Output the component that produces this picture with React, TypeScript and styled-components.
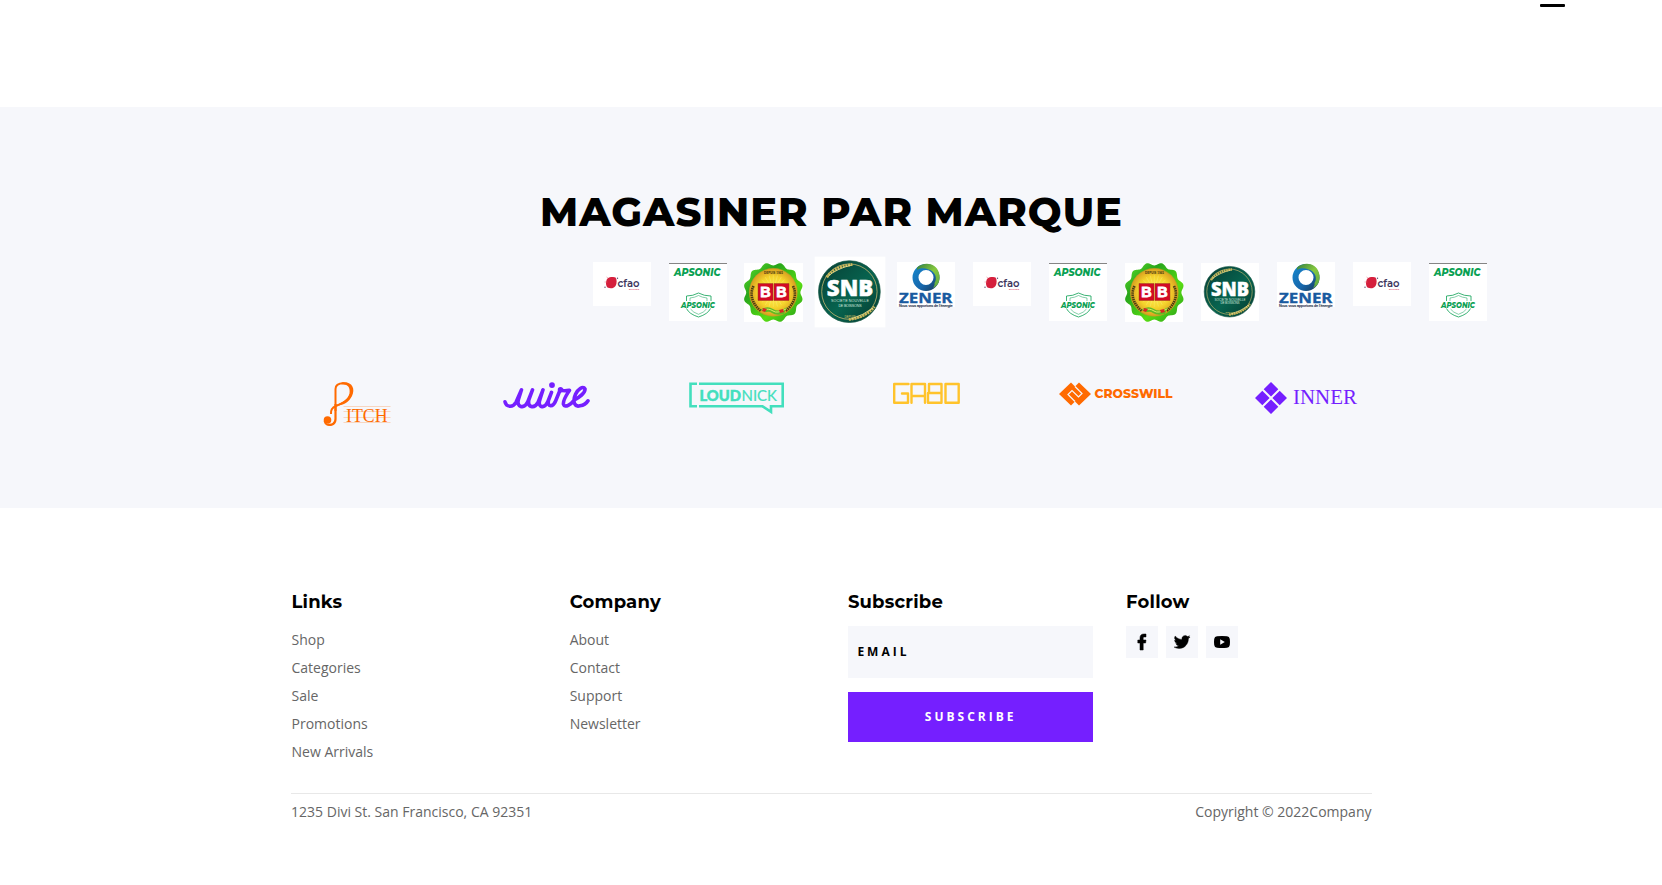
import React from 'react';
import styled, { createGlobalStyle } from 'styled-components';

const GlobalStyle = createGlobalStyle`
  *, *::before, *::after { box-sizing: border-box; }
  html, body { margin: 0; background: #fff; overflow: hidden; }
  body { font-family: 'Open Sans', 'Noto Sans', sans-serif; font-size: 14px; color: #666; }
  h2, h4, p, ul { margin: 0; padding: 0; }
  svg { display: block; overflow: visible; }
`;

const display = `Montserrat, Inter, 'Open Sans', sans-serif`;

const TopStrip = styled.div`
  display: flex;
  justify-content: flex-end;
  height: 107px;
  padding: 4px 97px 0 0;
`;

const Dash = styled.span`
  width: 25px;
  height: 3px;
  border-radius: 1px;
  background: #000;
`;

const BrandSection = styled.section`
  height: 401px;
  padding-top: 83px;
  background: #f6f7fb;
`;

const Title = styled.h2`
  height: 44px;
  padding-left: 1px;
  font: 800 40px/44px ${display};
  letter-spacing: 1px;
  text-align: center;
  color: #000;
  white-space: nowrap;
`;

const Carousel = styled.div`
  display: flex;
  align-items: flex-start;
  gap: 17.95px;
  height: 120px;
  padding: 28px 0 0 592.6px;
`;

const Tile = styled.div<{ $h: number; $top?: number; $active?: boolean }>`
  flex: 0 0 58px;
  height: ${(p) => p.$h}px;
  margin-top: ${(p) => p.$top ?? 0}px;
  background: #fff;
  transform: ${(p) => (p.$active ? 'scale(1.22)' : 'none')};
`;

const Container = styled.div`
  width: 1080px;
  margin: 0 auto;
`;

const Partners = styled(Container)`
  display: grid;
  grid-template-columns: repeat(6, 1fr);
  column-gap: 58px;
  padding: 28px 0 0 1px;
  width: 1081px;
  justify-items: center;
`;

const FooterColumns = styled(Container)`
  display: grid;
  grid-template-columns: repeat(4, 245.5px);
  column-gap: 32.7px;
  height: 285px;
  padding: 83px 0 0 0.5px;
`;

const ColumnTitle = styled.h4`
  height: 35px;
  font: 700 18px/22px ${display};
  letter-spacing: 0.2px;
  color: #000;
`;

const LinkList = styled.ul`
  list-style: none;
`;

const LinkItem = styled.li`
  height: 28px;
  line-height: 28px;
`;

const EmailInput = styled.input`
  display: block;
  width: 100%;
  height: 52px;
  padding: 0 9.5px 2px;
  border: 0;
  background: #f6f7fb;
  font: 700 12px 'Open Sans', sans-serif;
  letter-spacing: 3px;
  &::placeholder { color: #000; opacity: 1; }
`;

const SubscribeButton = styled.button`
  display: block;
  width: 100%;
  height: 50px;
  margin-top: 14px;
  padding: 0 6px 2px;
  border: 0;
  background: #751fff;
  color: #fff;
  font: 700 12px 'Open Sans', sans-serif;
  letter-spacing: 3px;
`;

const Socials = styled.div`
  display: flex;
  gap: 8px;
`;

const SocialLink = styled.a`
  display: grid;
  place-items: center;
  width: 32px;
  height: 32px;
  background: #f6f7fb;
`;

const Bottom = styled(Container)`
  display: flex;
  justify-content: space-between;
  padding: 6px 0 0 0.6px;
  width: 1081px;
  border-top: 1px solid #e8e8e8;
  line-height: 24px;
`;

const Cfao = () => (
  <Tile $h={44}>
    <svg width="58" height="44" viewBox="0 0 58 44">
      <path d="M14.500 16.500C17 14.500 21 15 22.500 15.500c1.500 2 1.500 6 0 8.500-2 3-6 2.500-8 1.500-2-2-2-6.500 0-9z" fill="#d51f3c" />
      <path d="M11.500 20h3M15 16l-1.500-1" stroke="#e66a7b" strokeWidth=".5" />
      <circle cx="24.500" cy="16.300" r=".7" fill="#565173" />
      <circle cx="12" cy="25.300" r=".7" fill="#565173" />
      <text x="24.500" y="24.500" fontFamily="Montserrat, Inter, sans-serif" fontWeight="600" fontSize="10" textLength="22" lengthAdjust="spacingAndGlyphs" fill="#3d365c">cfao</text>
      <text x="36" y="27.600" fontFamily="Liberation Sans" fontWeight="700" fontSize="2" textLength="10" fill="#d51f3c">MOTORS</text>
    </svg>
  </Tile>
);

const Apsonic = () => (
  <Tile $h={58.5} $top={0.5}>
    <svg width="58" height="58" viewBox="0 0 58 58">
      <path d="M0 .5H58" stroke="#777" strokeWidth=".9" />
      <g fontFamily="Montserrat, Open Sans, sans-serif" fontWeight="800" fontStyle="italic" fill="#09a052">
        <text x="5" y="13" fontSize="9.800" textLength="46.500" lengthAdjust="spacingAndGlyphs">APSONIC</text>
        <g fill="none" stroke="#09a052" strokeWidth=".8">
          <path d="M17.500 38V33Q24 33 29.500 30Q35 33 42 33V38M17.500 45.500Q20 51 29.500 54Q39 51 41.500 45.500" />
          <path d="M21 38V35Q26 34.500 29.500 32.500Q33 34.500 38 35V38M21.500 46Q24 49.500 29.500 51.300Q35 49.500 37.500 46" strokeWidth=".5" />
        </g>
        <text x="12" y="45" fontSize="8" textLength="34" lengthAdjust="spacingAndGlyphs">APSONIC</text>
      </g>
    </svg>
  </Tile>
);

const petals = (() => {
  const pts: string[] = [];
  for (let i = 0; i <= 180; i++) {
    const t = (i / 180) * Math.PI * 2;
    const r = 28.6 - 1.5 * Math.cos(12 * t);
    pts.push(`${(29.3 + r * Math.sin(t)).toFixed(2)},${(29.5 - r * Math.cos(t)).toFixed(2)}`);
  }
  return pts.join(' ');
})();

const BB = ({ id }: { id: string }) => (
  <Tile $h={59} $top={0.5}>
    <svg width="58.6" height="59" viewBox="0 0 58.6 59">
      <defs>
        <radialGradient id={`${id}-gold`}>
          <stop offset="0" stopColor="#fff65e" />
          <stop offset=".65" stopColor="#f5d32c" />
          <stop offset="1" stopColor="#d89e20" />
        </radialGradient>
        <linearGradient id={`${id}-green`} x1="0" y1="0" x2="1" y2="1">
          <stop offset="0" stopColor="#66e52c" />
          <stop offset=".3" stopColor="#27a51b" />
          <stop offset=".65" stopColor="#58dc13" />
          <stop offset="1" stopColor="#23991b" />
        </linearGradient>
      </defs>
      <polygon points={petals} fill={`url(#${id}-green)`} />
      <circle cx="29.300" cy="29.300" r="24" fill={`url(#${id}-gold)`} stroke="#b99c25" strokeWidth=".5" />
      <g stroke="#fff7a0" strokeWidth=".4" opacity=".65">
        {Array.from({ length: 24 }, (_, i) => (
          <path key={i} d="M29.300 28V12" transform={`rotate(${i * 15} 29.3 28)`} />
        ))}
      </g>
      <g fill="none" stroke="#493b14" strokeWidth="2.600" strokeDasharray="1.500 .7">
        <path d="M9.500 23C5 32 9 42 17 48" />
        <path d="M49 23C53.500 32 49.500 42 41.500 48" />
      </g>
      <text x="20" y="11.500" fontFamily="Liberation Sans" fontSize="3" fontWeight="700" textLength="19" fill="#3c2c11">DEPUIS 1965</text>
      <path d="M14 20.500h15v17h-15zM30 20.500h15v17h-15z" fill="#d20a25" stroke="#99411e" strokeWidth=".5" />
      <g fontFamily="Liberation Sans" fontWeight="700" fontSize="14.500" fill="#fff" stroke="#fff" strokeWidth=".8">
        <text x="16.300" y="34">B</text>
        <text x="32.300" y="34">B</text>
      </g>
      <path d="M16 47Q23 42 29 46T43 44L40 51Q32 53 28 50T18 51L22 49z" fill="#60ba25" />
      <path d="M18 47Q25 45 29 48T42 46" fill="none" stroke="#dded61" />
      <path d="M19 45l4 1-2 3-3-1zM35 47l4-1 1 3-4 1z" fill="#d82923" />
    </svg>
  </Tile>
);

const Snb = ({ id, active }: { id: string; active?: boolean }) => (
  <Tile $h={58} $top={0.8} $active={active}>
    <svg width="58" height="58" viewBox="0 0 58 58">
      <defs>
        <linearGradient id={id} x1="0" y1="0" x2="1" y2="1">
          <stop offset="0" stopColor="#073c34" />
          <stop offset=".55" stopColor="#07644f" />
          <stop offset="1" stopColor="#05382f" />
        </linearGradient>
      </defs>
      <circle cx="28.500" cy="28.700" r="25.300" fill={`url(#${id})`} stroke="#195946" strokeWidth=".6" />
      <circle cx="28.500" cy="28.700" r="22.700" fill="none" stroke="#b8b16c" strokeWidth=".7" />
      <g fill="none" stroke="#cab759" strokeWidth="2.300" strokeDasharray="1.700 .6">
        <path d="M10 17Q16 8 31 6.500" />
        <path d="M28 51.500Q42 50 49 41" />
      </g>
      <path d="M11 16Q18 10 30 7M30 51Q40 48 48 42" fill="none" stroke="#f1df8e" strokeWidth=".7" />
      <text x="10" y="32.600" fontFamily="Open Sans, sans-serif" fontWeight="800" fontSize="18.500" textLength="38" lengthAdjust="spacingAndGlyphs" fill="#fff" stroke="#fff" strokeWidth=".4">SNB</text>
      <g fontFamily="Liberation Sans" fontSize="3" fill="#d5e7df">
        <text x="13.500" y="37.600" textLength="31">SOCIETE NOUVELLE</text>
        <text x="19.500" y="41.200" textLength="19">DE BOISSONS</text>
      </g>
      <text x="24.500" y="50" fontFamily="Liberation Sans" fontSize="2.500" textLength="9" fill="#d7c66a">DEPUIS</text>
    </svg>
  </Tile>
);

const Zener = ({ id }: { id: string }) => (
  <Tile $h={45}>
    <svg width="58" height="45" viewBox="0 0 58 45">
      <defs>
        <linearGradient id={`${id}-g`} x1="0" y1="0" x2="1" y2="1">
          <stop offset="0" stopColor="#327d41" />
          <stop offset=".5" stopColor="#85c83e" />
          <stop offset="1" stopColor="#58a543" />
        </linearGradient>
        <linearGradient id={`${id}-b`} x1="0" y1="0" x2="1" y2="1">
          <stop offset="0" stopColor="#1683c8" />
          <stop offset=".6" stopColor="#1767ad" />
          <stop offset="1" stopColor="#184064" />
        </linearGradient>
      </defs>
      <circle cx="29" cy="15.500" r="10.500" fill="none" stroke={`url(#${id}-b)`} strokeWidth="6" />
      <path d="M20 5.500C27-.5 39 .5 42 11c2 7-1 13-6 15 1-2 2-3 1.500-5 3-4 1-12-6-13.500C27 5.500 23 6 20 8z" fill={`url(#${id}-g)`} />
      <text x="2" y="41.300" fontFamily="Open Sans, sans-serif" fontWeight="700" fontSize="13.800" textLength="53.500" lengthAdjust="spacingAndGlyphs" fill="#185aa0" stroke="#185aa0" strokeWidth=".3">ZENER</text>
      <text x="2" y="44.800" fontFamily="Liberation Sans" fontSize="3.300" textLength="53.500" lengthAdjust="spacingAndGlyphs" fill="#202b45" stroke="#202b45" strokeWidth=".15">Nous vous apportons de l'énergie</text>
    </svg>
  </Tile>
);

const Pitch = () => (
  <svg width="67" height="44" viewBox="0.5 0 67 44">
    <path d="M20 24.500H67M20 29.500H67M20 35.500H67M20 40.500H67" stroke="#ff6a00" strokeWidth=".6" opacity=".38" />
    <path d="M12 29V7C12 2 17 1.200 20 1.200c5 0 8 3 8 7 0 8-6 12-15 15.500C8 26 7.300 28 7.500 32" fill="none" stroke="#ff6a00" strokeWidth="2" />
    <path d="M18 .5C29-.8 32 7 28.500 14c-3 6-8 8.500-13 9.500l-2-1c5-2 11-5 12.500-11C27 5 24 2 18 2.200z" fill="#ff6a00" />
    <path d="M12 22V37C12 42 8 43.500 4.500 42.500" fill="none" stroke="#ff6a00" strokeWidth="2.200" />
    <circle cx="4" cy="38" r="3.800" fill="#ff6a00" />
    <path d="M1 39C1.500 43 5 43.500 8 42.500" fill="none" stroke="#ff6a00" strokeWidth="1.700" />
    <text x="22.500" y="39.600" fontFamily="Liberation Serif" fontSize="18" textLength="41.500" lengthAdjust="spacingAndGlyphs" fill="#ff6a00">ITCH</text>
  </svg>
);

const Wire = () => (
  <svg width="87" height="27" viewBox="0 -0.300 87 27" fill="none" stroke="#751fff" strokeWidth="3.600" strokeLinecap="round" strokeLinejoin="round">
    <path d="M2 19.500C3 25 10 25.500 13 20L18.500 7.500L15.500 17C13 25 21 27 24.500 20L29.500 7.500L26 17C24 25 31 27 35 20L40 7.500L37 17C34 25 41 27 44.500 20L48.500 10L45.500 18C44 25 50 25 52.500 19L57 8M57 7.500C60 9 63 8.500 66.500 8C64 12 59.500 18 60.500 22C62 26 68 22 71 18C76 15 82.500 11 82 6.500C80 3 74.500 7.500 72.500 12C69 20 72 25 77 23.500C81 23 83.500 21 85 18.500" />
    <circle cx="49" cy="2.800" r="2.900" fill="#751fff" stroke="none" />
    <circle cx="57.500" cy="7.500" r="2.700" fill="#751fff" stroke="none" />
  </svg>
);

const Loudnick = () => (
  <svg width="95" height="32" viewBox="0 -0.300 95 32">
    <path d="M8 1.500H1.500V24H8M10 1.500H93.700V24H82V29.500L73.500 24H10" fill="none" stroke="#43dfbd" strokeWidth="2.600" />
    <g fontFamily="Lato, sans-serif" fontSize="15.500" fill="#43dfbd">
      <text x="10.500" y="18.500" fontWeight="900" textLength="41.500" lengthAdjust="spacingAndGlyphs" stroke="#43dfbd" strokeWidth=".5">LOUD</text>
      <text x="52.500" y="18.500" textLength="35.500" lengthAdjust="spacingAndGlyphs" stroke="#43dfbd" strokeWidth=".2">NICK</text>
    </g>
  </svg>
);

const Gabo = () => (
  <svg width="67" height="22" viewBox="0 0 67 22" fill="none" stroke="#ffc32b" strokeWidth="2.400" strokeLinecap="round" strokeLinejoin="round">
    <path d="M15.500 2H1.200V20.800H15V11.500H9M18.500 20.800V2H32V20.800M18.500 14H32M36 11V2H48.500V20.800H35V11H48.500M52.500 2H65.700V20.800H52.500Z" />
  </svg>
);

const Crosswill = () => (
  <svg width="114" height="24" viewBox="0 0 114 24">
    <path d="M0 12L12 .5L16 4.500L20 .5L32 12L20 23.500L16 19.500L12 23.500Z" fill="#ff6a00" />
    <path d="M16 4.500L23 11.500L19.500 15L13 8.500L9 12.500L16 19.500M14.500 18L10 13.500M20 8.500L16 4.500" fill="none" stroke="#f6f7fb" strokeWidth="1.200" />
    <text x="35.500" y="16.200" fontFamily="Montserrat, Inter, sans-serif" fontWeight="800" fontSize="12.700" textLength="78" lengthAdjust="spacingAndGlyphs" fill="#ff6a00">CROSSWILL</text>
  </svg>
);

const Inner = () => (
  <svg width="102" height="32" viewBox="0 0 102 32" fill="#751fff">
    <path d="M16 0L23.300 7.300L16 14.600L8.700 7.300ZM7.300 8.700L14.600 16L7.300 23.300L0 16ZM24.700 8.700L32 16L24.700 23.300L17.400 16ZM16 17.400L23.300 24.700L16 32L8.700 24.700Z" />
    <text x="38" y="22.300" fontFamily="Liberation Serif" fontSize="21" textLength="64" lengthAdjust="spacingAndGlyphs">INNER</text>
  </svg>
);

const FacebookIcon = () => (
  <svg width="16" height="16" viewBox="0 0 16 16">
    <path d="M6 16V9H3.800V6H6V4C6 1.400 7.300 0 10 0H12V3H10.500C9.500 3 9.200 3.400 9.200 4.200V6H12L11.600 9H9.200V16Z" stroke="#000" strokeWidth=".5" />
  </svg>
);

const TwitterIcon = () => (
  <svg width="16" height="16" viewBox="0 0 24 24">
    <path d="M24 4.560a10 10 0 0 1-2.830.77 4.900 4.900 0 0 0 2.160-2.720 10 10 0 0 1-3.120 1.190A4.920 4.920 0 0 0 11.830 8.280 14 14 0 0 1 1.670 3.150a4.930 4.930 0 0 0 1.520 6.570 4.900 4.900 0 0 1-2.230-.61 4.930 4.930 0 0 0 3.950 4.890 5 5 0 0 1-2.220.08 4.930 4.930 0 0 0 4.600 3.420A9.900 9.900 0 0 1 0 19.540a14 14 0 0 0 7.550 2.210c9.140 0 14.310-7.720 14-14.640A10 10 0 0 0 24 4.560z" stroke="#000" strokeWidth=".6" />
  </svg>
);

const YoutubeIcon = () => (
  <svg width="16" height="12" viewBox="0 0 16 12">
    <path fillRule="evenodd" d="M3 .3Q8-.3 13 .3Q15.500.5 15.800 3Q16.200 6 15.800 9Q15.500 11.500 13 11.700Q8 12.300 3 11.700Q.5 11.500.2 9Q-.2 6 .2 3Q.5.5 3 .3ZM6.200 3.300V8.700L10.800 6Z" />
  </svg>
);

const links = ['Shop', 'Categories', 'Sale', 'Promotions', 'New Arrivals'];
const company = ['About', 'Contact', 'Support', 'Newsletter'];

const LinkColumn = ({ title, items }: { title: string; items: string[] }) => (
  <div>
    <ColumnTitle>{title}</ColumnTitle>
    <LinkList>
      {items.map((item) => (
        <LinkItem key={item}>{item}</LinkItem>
      ))}
    </LinkList>
  </div>
);

export default function App() {
  return (
    <>
      <GlobalStyle />
      <TopStrip>
        <Dash />
      </TopStrip>
      <BrandSection>
        <Title>MAGASINER PAR MARQUE</Title>
        <Carousel>
          <Cfao />
          <Apsonic />
          <BB id="bb1" />
          <Snb id="snb1" active />
          <Zener id="zener1" />
          <Cfao />
          <Apsonic />
          <BB id="bb2" />
          <Snb id="snb2" />
          <Zener id="zener2" />
          <Cfao />
          <Apsonic />
        </Carousel>
        <Partners>
          <Pitch />
          <Wire />
          <Loudnick />
          <Gabo />
          <Crosswill />
          <Inner />
        </Partners>
      </BrandSection>
      <footer>
        <FooterColumns>
          <LinkColumn title="Links" items={links} />
          <LinkColumn title="Company" items={company} />
          <div>
            <ColumnTitle>Subscribe</ColumnTitle>
            <EmailInput placeholder="EMAIL" />
            <SubscribeButton>SUBSCRIBE</SubscribeButton>
          </div>
          <div>
            <ColumnTitle>Follow</ColumnTitle>
            <Socials>
              <SocialLink><FacebookIcon /></SocialLink>
              <SocialLink><TwitterIcon /></SocialLink>
              <SocialLink><YoutubeIcon /></SocialLink>
            </Socials>
          </div>
        </FooterColumns>
        <Bottom>
          <p>1235 Divi St. San Francisco, CA 92351</p>
          <p>Copyright © 2022Company</p>
        </Bottom>
      </footer>
    </>
  );
}
